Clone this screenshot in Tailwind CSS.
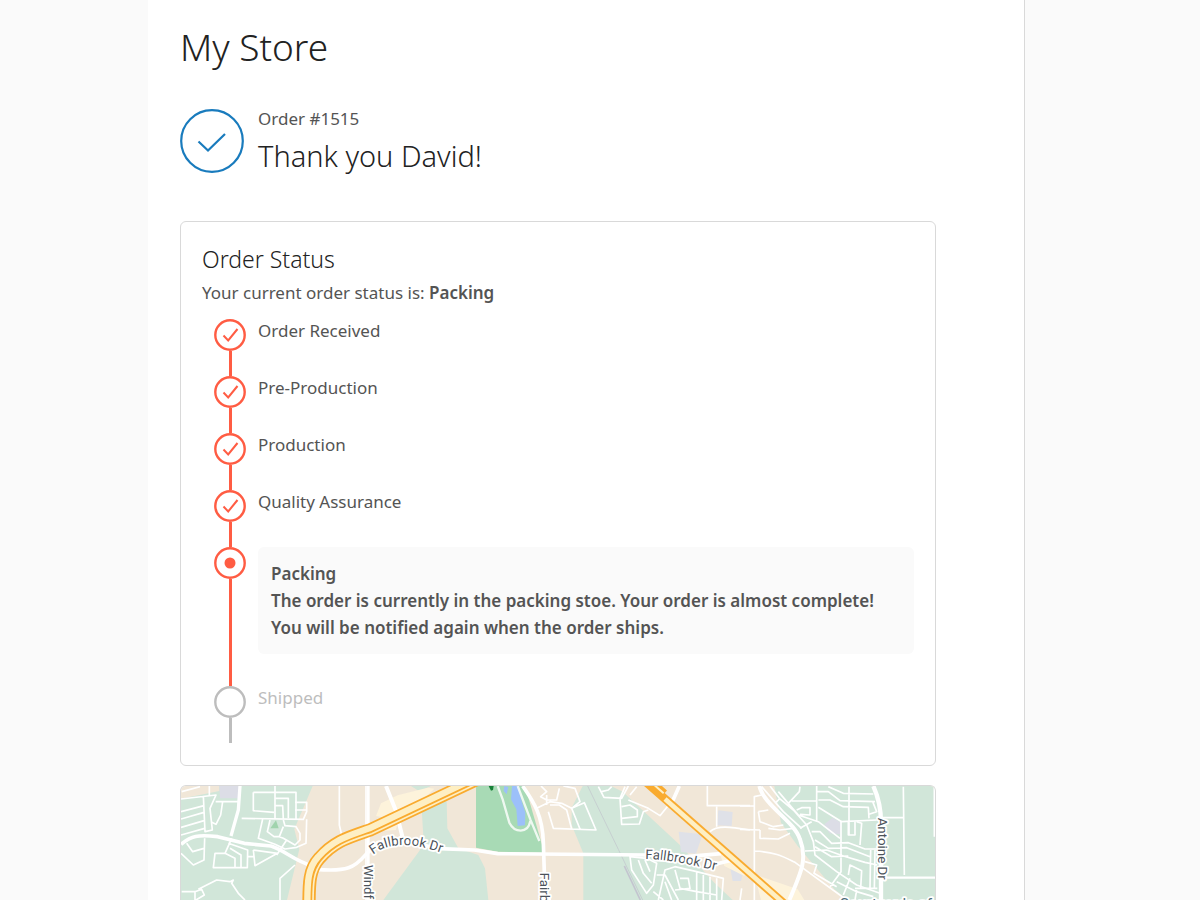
<!DOCTYPE html>
<html lang="en">
<head>
    <meta charset="UTF-8">
    <meta name="viewport" content="width=device-width, initial-scale=1.0">
    <title>My Store - Order #1515</title>
    <script src="https://cdn.jsdelivr.net/npm/@tailwindcss/browser@4"></script>
</head>
<body class="bg-[#fafafa] font-['Noto_Sans','Open_Sans',sans-serif] text-[#545454]">

    <!-- Shared icons -->
    <svg class="hidden" aria-hidden="true">
        <symbol id="step-done" viewBox="0 0 32 32" fill="none" stroke="#ff5c43">
            <circle cx="16" cy="16" r="14.7" stroke-width="2.4"/>
            <path d="m9.500 16.500 4.700 5L23.500 10" stroke-width="2"/>
        </symbol>
        <symbol id="step-current" viewBox="0 0 32 32">
            <circle cx="16" cy="16" r="14.7" fill="none" stroke="#ff5c43" stroke-width="2.4"/>
            <circle cx="16" cy="16" r="5.5" fill="#ff5c43"/>
        </symbol>
        <symbol id="step-pending" viewBox="0 0 32 32">
            <circle cx="16" cy="16" r="14.7" fill="none" stroke="#bdbdbd" stroke-width="2.4"/>
        </symbol>
    </svg>

    <main class="ml-37 mr-[175px] min-h-screen border-r border-[#d9d9d9] bg-white pl-8 pr-[88px]">

        <!-- Store name -->
        <h1 class="pt-[23px] text-[37px] leading-12 font-light text-[#222222]">My Store</h1>

        <!-- Order heading -->
        <header class="mt-[34px] flex h-20 items-start gap-3.5">
            <svg class="mt-1 size-16 shrink-0" viewBox="0 0 64 64" fill="none" stroke="#197bbd" stroke-width="2.2" aria-hidden="true">
                <circle cx="32" cy="32" r="30.8"/>
                <path d="M18.500 32.500 28 41.500 45 25"/>
            </svg>
            <div>
                <p class="text-[17px] leading-7">Order #1515</p>
                <h2 class="mt-[3px] text-[29px] leading-10 font-light text-[#222222]">Thank you David!</h2>
            </div>
        </header>

        <!-- Order status card -->
        <section class="mt-9 rounded-md border border-[#d9d9d9] px-[21px] pt-[21px] pb-[22px]">
            <h2 class="text-[23px] leading-8 font-light text-[#222222]">Order Status</h2>
            <p class="mt-1 text-[17px] leading-7">Your current order status is: <strong class="font-semibold">Packing</strong></p>

            <ol class="mt-3 ml-3 text-[17px]">
                <li class="flex gap-3">
                    <div class="flex flex-col items-center">
                        <svg class="size-8 shrink-0" aria-hidden="true"><use href="#step-done"/></svg>
                        <div class="h-[25px] w-[3px] bg-[#ff5c43]"></div>
                    </div>
                    <p class="leading-6">Order Received</p>
                </li>
                <li class="flex gap-3">
                    <div class="flex flex-col items-center">
                        <svg class="size-8 shrink-0" aria-hidden="true"><use href="#step-done"/></svg>
                        <div class="h-[25px] w-[3px] bg-[#ff5c43]"></div>
                    </div>
                    <p class="leading-6">Pre-Production</p>
                </li>
                <li class="flex gap-3">
                    <div class="flex flex-col items-center">
                        <svg class="size-8 shrink-0" aria-hidden="true"><use href="#step-done"/></svg>
                        <div class="h-[25px] w-[3px] bg-[#ff5c43]"></div>
                    </div>
                    <p class="leading-6">Production</p>
                </li>
                <li class="flex gap-3">
                    <div class="flex flex-col items-center">
                        <svg class="size-8 shrink-0" aria-hidden="true"><use href="#step-done"/></svg>
                        <div class="h-[25px] w-[3px] bg-[#ff5c43]"></div>
                    </div>
                    <p class="leading-6">Quality Assurance</p>
                </li>
                <li class="flex gap-3" aria-current="step">
                    <div class="flex flex-col items-center">
                        <svg class="size-8 shrink-0" aria-hidden="true"><use href="#step-current"/></svg>
                        <div class="w-[3px] grow bg-[#ff5c43]"></div>
                    </div>
                    <div class="mb-8 grow rounded-md bg-[#fafafa] p-[13px] leading-[27px] font-semibold">
                        <p>Packing</p>
                        <p>The order is currently in the packing stoe. Your order is almost complete!<br>You will be notified again when the order ships.</p>
                    </div>
                </li>
                <li class="flex gap-3">
                    <div class="flex flex-col items-center">
                        <svg class="size-8 shrink-0" aria-hidden="true"><use href="#step-pending"/></svg>
                        <div class="h-[25px] w-[3px] bg-[#bdbdbd]"></div>
                    </div>
                    <p class="leading-6 text-[#bdbdbd]">Shipped</p>
                </li>
            </ol>
        </section>

        <!-- Delivery map -->
        <section class="mt-[19px] overflow-hidden rounded-t-md border border-b-0 border-[#d9d9d9]" aria-label="Map">
            <svg class="block h-[114px] w-full bg-[#f1e7d8]" viewBox="0 0 2262 342" preserveAspectRatio="xMidYMin slice" fill="none" stroke-linejoin="round" font-family="Roboto, sans-serif">

                <!-- Land cover -->
                <g fill="#d1e6d9">
                    <path d="M0 38 115 15V0H395L340 130 355 190 318 342H0Z"/>
                    <path d="M690 0H750L715 16ZM722 70 797 45 799 127 832 187 892 207 912 247 922 342H607L717 192 727 150Z"/>
                    <path d="M1205 0H1290L1325 17 1500 180 1600 290 1655 342H1207V202L1172 117V65Z"/>
                    <path d="M1780 0H2262V342H2000L1960 310 1850 180 1800 110Z"/>
                </g>
                <path d="M115 0H173V37H117Z" fill="#dcdde6"/>
                <path d="M268 127 285 103 293 127Z" fill="#a0d3ad"/>
                <path d="M885 0H1032L1090 200 950 197 885 185Z" fill="#a8dab5"/>
                <path d="M993 0H1010L1022 45 1033 80 1032 118 1010 120 1006 70 990 40ZM970 0 982 3 977 25 968 15Z" fill="#9cc0f9"/>
                <path d="M923 0H938L936 12 930 14Z" fill="#188038"/>
                <path d="M585 90 600 52 650 28 740 5 760 8 660 105ZM590 130 650 110 645 132 600 135Z" fill="#fdf3db"/>
                <path d="M1493 137 1565 145 1545 203 1500 197ZM1612 73 1655 78 1652 120 1608 118ZM1590 150 1640 190 1615 200ZM1645 230 1690 245 1680 285 1655 285Z" fill="#dfe1e8"/>
                <path d="M1615 200 1700 250 1690 270 1630 240ZM1720 265 1850 310 1870 342H1740Z" fill="#fdf3db"/>
                <path d="M1930 115 1955 95 1980 110 1977 145 1945 142Z" fill="#dcdde6"/>

                <!-- Railway -->
                <path d="M1220 0 1312 190 1385 342" stroke="#c6cfd0" stroke-width="3"/>
                <path d="M1330 240 1378 342" stroke="#c3c4cf" stroke-width="5"/>

                <!-- Small streets, west -->
                <g transform="translate(-33 -33)" stroke="#fff" stroke-width="5">
                    <path d="M35 50 90 35M33 72 138 60 120 100 127 165 105 170 100 62M118 33V60M33 110 102 92M33 132 102 112M33 157 102 137M33 180 104 160"/>
                    <path d="M137 80H205M158 80 152 120 138 148 125 142M215 130 400 133 410 110V82H375M375 105H408"/>
                    <path d="M250 52H378V132M250 52V107L312 112M315 33V132M315 70H355V130M315 92H338L340 132"/>
                    <path d="M278 132 265 190 315 208 345 222 380 217 408 205 410 133M300 135 292 170 312 185 328 185M340 135 345 152 378 155 390 175V195L375 210 340 190 328 185 340 155"/>
                    <path d="M33 235 70 270 102 255 104 190M50 205 68 230 102 220M185 190 165 235 135 235 130 278H232L233 225 175 205M165 235 195 250V278M180 220 213 240V278M233 245H250M250 225 322 235 255 272 250 225M320 240 350 195"/>
                    <path d="M375 270 330 310V375M35 350H75V375M75 350 95 343 103 360 78 375M85 343 140 315 180 320 190 315 185 325 205 355 225 375"/>
                    <path d="M508 33V150L515 180M588 33V375"/>
                </g>

                <!-- Small streets, centre -->
                <g transform="translate(1107 -33)" stroke="#fff" stroke-width="5">
                    <path d="M-27 33 -10 50-28 65-10 75 20 75 28 40M-40 100 0 80 35 85 65 100 90 80 75 40 40 33M-10 90V60M-5 110 10 160 138 165 103 83 65 100 90 162M0 90 28 90 50 105 65 162"/>
                    <path d="M145 35 162 67 215 70 235 33M155 50 175 45 185 35M225 35 210 70 215 148 268 147 280 110 295 105M215 95 240 90 262 105V125L215 130M235 75 295 100 330 122 368 75M240 60 260 35"/>
                    <path d="M472 33V92H600M500 95V155M480 170C500 150 540 155 600 165"/>
                    <path d="M240 245 245 285 290 355 310 330 320 265 290 250ZM265 255 280 295 305 325M285 255 300 290M320 300 345 300 385 375M325 375 345 285 375 275 440 290 520 310 515 375M375 285 390 340 440 350M390 310 415 310 420 340 375 345M440 290V375M460 300V375M480 305V375M500 310V375M440 350 500 360M310 350 340 375M345 320 365 375M575 340 570 375"/>
                    <path d="M0 295V310M0 335V345M0 365V375" stroke-width="6"/>
                </g>

                <!-- Small streets, east -->
                <g transform="translate(1677 -33)" stroke="#fff" stroke-width="5">
                    <path d="M65 60 43 65V375M0 93H43M0 163 60 165M55 110 60 140 100 155 130 150M55 110 85 105M60 165V190L115 192 150 175M85 160 120 165 160 160M45 228C110 232 130 245 165 262L320 375"/>
                    <path d="M65 35 130 110 185 160M90 33 118 70 160 105 200 150 220 200 225 240 290 290 350 330 420 355M115 50 145 85 178 50 180 35M105 85 120 70M145 85 175 120 235 140 300 190M170 105 185 98H210V120L180 118M155 78H230M230 33V137M230 50H265L300 77 405 80M235 75 270 75 310 95 385 97 387 130M235 97 305 140 410 135M265 35 310 55 400 57M327 35V180M398 80 410 110 387 118"/>
                    <path d="M180 160 215 140M215 170 240 170 275 205 325 203 375 222 410 222M225 195 265 220 320 218 390 245M195 228 260 225 310 243 375 262 412 270M225 215 275 245 325 243M303 137V290L270 335M325 140V180H345V140M350 140 365 145 360 210M195 260 230 270 222 295 290 335M325 300 330 270 365 287 362 340M392 225 390 338M405 225 403 342M345 340H412M330 310 310 360M290 320 350 350 400 365M350 345 345 375"/>
                    <path d="M425 128H490M490 35 493 300M583 35V185"/>
                    <path d="M430 308H585" stroke-width="7"/>
                </g>

                <!-- Main roads -->
                <g stroke="#fff" stroke-width="11">
                    <path d="M0 175C30 150 50 145 110 152L190 172 270 180C310 192 340 225 395 240"/>
                    <path d="M177 0 172 72 150 150" stroke-width="10"/>
                    <path d="M405 250C500 258 520 245 555 205L590 170 650 160 775 188 880 192 950 203 1400 207 1480 215 1620 203"/>
                    <path d="M562 0V342" stroke-width="8"/>
                    <path d="M615 0 645 75 665 155" stroke-width="12"/>
                    <path d="M950 0 965 40 985 110C1000 140 1040 145 1048 105M1010 0 1048 100 1075 165" stroke-width="7" stroke-opacity=".8"/>
                    <path d="M1025 0C1060 50 1085 90 1087 170L1090 260V342"/>
                    <path d="M1495 0 1475 45M1580 240 1655 222"/>
                    <path d="M1735 0C1750 60 1840 105 1857 160 1880 220 1860 260 1825 342" stroke-width="12"/>
                    <path d="M2077 0C2095 40 2100 70 2100 110V342" stroke-width="13"/>
                </g>

                <!-- Highways -->
                <g>
                    <path d="M384 355C384 290 385 250 415 217 460 165 500 155 567 132L890-21" stroke="#f9ab2f" stroke-width="40"/>
                    <path d="M379 355C379 288 380 246 411 213 457 161 498 151 565 127L888-26" stroke="#feefc3" stroke-width="19"/>
                    <path d="M396 355C396 293 397 257 424 225 467 176 505 166 572 143L895-10" stroke="#feefc3" stroke-width="5"/>
                    <path d="M1390-16 1812 355" stroke="#f9ab2f" stroke-width="25"/>
                    <path d="M1404-22 1452 20" stroke="#f9ab2f" stroke-width="18"/>
                    <path d="M1452 39 1812 355" stroke="#feefc3" stroke-width="14"/>
                    <path d="M1403-18 1448 22" stroke="#feefc3" stroke-width="6"/>
                </g>

                <!-- Street names -->
                <path id="fallbrook-west" d="M576 206C622 168 700 165 810 212"/>
                <path id="fallbrook-east" d="M1393 219C1450 219 1520 232 1660 267"/>
                <g fill="#4b5259" stroke="#fff" stroke-width="11" paint-order="stroke" font-size="40">
                    <text><textPath href="#fallbrook-west">Fallbrook Dr</textPath></text>
                    <text><textPath href="#fallbrook-east">Fallbrook Dr</textPath></text>
                    <text transform="translate(549 236) rotate(90)">Windf</text>
                    <text transform="translate(1078 260) rotate(90)">Fairb</text>
                    <text transform="translate(2092 95) rotate(90)">Antoine Dr</text>
                    <text x="1975" y="368" font-size="46" fill="#4d6b78">Courtyards of</text>
                </g>
            </svg>
        </section>
    </main>

</body>
</html>
